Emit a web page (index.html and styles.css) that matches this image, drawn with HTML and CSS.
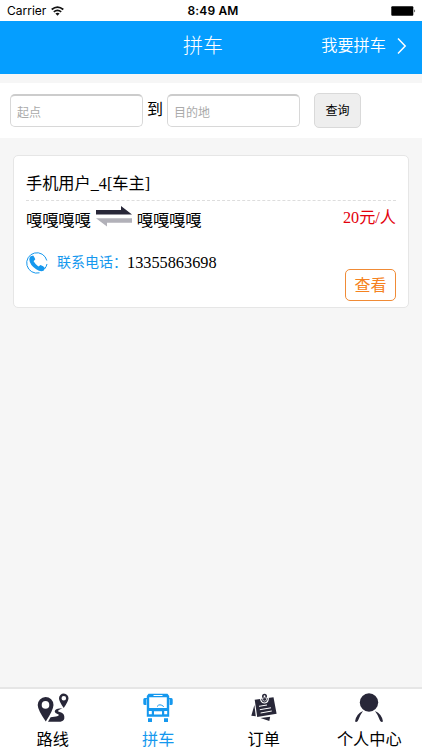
FILE: index.html
```html
<!DOCTYPE html>
<html lang="zh-CN">
<head>
<meta charset="utf-8">
<title>拼车</title>
<link rel="stylesheet" href="styles.css">
</head>
<body>
<div class="app">
  <div class="status">
    <div class="carrier"><span>Carrier</span>
      <svg width="13" height="10" viewBox="0 0 13 10" fill="none" stroke="#111" stroke-width="1.7"><path d="M.7 3.5Q6.5-1.4 12.3 3.5M2.8 5.8Q6.5 2.8 10.2 5.8"/><path d="M4.4 7.5Q6.5 5.9 8.6 7.5L6.5 9.7Z" fill="#111" stroke="none"/></svg>
    </div>
    <span class="time">8:49 AM</span>
    <svg class="battery" width="26" height="10" viewBox="0 0 26 10"><rect x=".3" y=".3" width="22" height="9.4" rx="1"/><path d="M23.4 3.2Q25 5 23.4 6.5Z"/></svg>
  </div>
  <header class="header">
    <h1>拼车</h1>
    <a class="publish"><span>我要拼车</span>
      <svg width="10" height="18" viewBox="0 0 10 18" fill="none" stroke="#fff" stroke-width="1.5"><path d="M1 1.5L8.2 9L1 16.5"/></svg>
    </a>
  </header>
  <form class="search">
    <input class="place" placeholder="起点">
    <span class="to">到</span>
    <input class="place" placeholder="目的地">
    <button class="query" type="button">查询</button>
  </form>
  <main class="content">
    <article class="card">
      <div class="user">手机用户_4[车主]</div>
      <div class="route">
        <span class="stop">嘎嘎嘎嘎</span>
        <svg class="swap" width="36" height="21" viewBox="0 0 36 21"><path d="M0 4H25V0L36 8.5H0Z" fill="#282738"/><path d="M36 12.3H0L11 20.5V16.7H36Z" fill="#b2b1b9"/></svg>
        <span class="stop">嘎嘎嘎嘎</span>
        <span class="price">20元/人</span>
      </div>
      <div class="contact">
        <svg width="22" height="22" viewBox="0 0 22 22"><path d="M13.5 20.8A10.2 10.2 0 1 1 20.8 8.5M21 12Q20.3 15 18.5 17" fill="none" stroke="#1598ee" stroke-width="1"/><path d="M4.6 4.2L7.2 3.6Q8.2 4.7 9.3 7.3L7.6 9.3Q9.2 12.3 12.4 14.5L14.5 13.1Q17.5 14.3 19 16L17.8 18.5Q14.8 20.4 10.2 17.2Q3.6 12.7 3.3 7.4Q3.4 5.3 4.6 4.2Z" fill="#1598ee"/></svg>
        <span class="label">联系电话：</span><span class="phone">13355863698</span>
      </div>
      <button class="view" type="button">查看</button>
    </article>
  </main>
  <nav class="tabs">
    <a class="tab">
      <svg width="32" height="30" viewBox="0 0 32 30"><path fill="#282738" fill-rule="evenodd" d="M8.5 4A8 8 0 0 0 .7 12Q.8 17 8.8 28.5Q16.3 17 16.5 12A8 8 0 0 0 8.5 4ZM8.5 8.1a3.8 3.8 0 1 1 0 7.6a3.8 3.8 0 0 1 0-7.6ZM26.8.5A4.8 4.8 0 0 0 22 5.3Q22 8.5 26.7 15Q31.4 8.5 31.5 5.3A4.8 4.8 0 0 0 26.8.5ZM26.8 3a2.3 2.3 0 1 1 0 4.6a2.3 2.3 0 0 1 0-4.6Z"/><path fill="#282738" d="M25.5 15.2Q18 15.3 17.7 18.4Q17.7 20 21 21.2Q23.5 22.3 19 23.4L13.6 24.2L11 28.8H23.5Q28 27.5 27.3 23.4Q27 20 22 18.8Q18.8 17.8 25.5 15.2Z"/></svg>
      <span>路线</span>
    </a>
    <a class="tab active">
      <svg width="30" height="30" viewBox="0 0 30 30"><path fill="#1598ee" fill-rule="evenodd" d="M5.5.8H24.5L26.2 3V23.8H3.8V3ZM6.2 4.2V15H23.8V4.2ZM5.8 18V21.2H8.8V18ZM11 18.3V21.5H19V18.3ZM21.2 18V21.2H24.2V18Z"/><path fill="#fff" d="M10.5 2H19.5V3H10.5Z"/><path fill="#1598ee" d="M.3 6.5Q.3 5 1.7 5H4.5V6.3H3.4V12H1.8Q.3 12 .3 10.5ZM29.7 6.5Q29.7 5 28.3 5H25.5V6.3H26.6V12H28.2Q29.7 12 29.7 10.5ZM5 25.2H9V29H5ZM21 25.2H25V29H21Z"/><path d="M14 13.6Q16.5 10 20.8 13.6" fill="none" stroke="#1598ee"/></svg>
      <span>拼车</span>
    </a>
    <a class="tab">
      <svg width="26" height="30" viewBox="0 0 26 30"><path fill="#282738" d="M3.4 12L.3 22.8L4.8 23.2ZM9.5 25L18.3 28L19.2 23.8ZM3.7 6.8L22.5 4.2L25.6 20.8L6.2 24Z"/><path d="M9.5 5.5Q10 10 13.7 10Q17.5 9.5 17.3 4.7" fill="none" stroke="#fff" stroke-width="1.2"/><circle cx="13.5" cy="3.2" r="1.7" fill="none" stroke="#282738" stroke-width="1.6"/><path d="M11.5 5.3Q13.5 4.2 15.7 5L15.4 7.3Q13.5 9 11.8 7.4Z" fill="#282738" stroke="#fff" stroke-width=".7"/><path d="M8 13.3L16 12M8.8 16.7L20 14.8M9.6 20L20.8 18" fill="none" stroke="#fff"/></svg>
      <span>订单</span>
    </a>
    <a class="tab">
      <svg width="30" height="30" viewBox="0 0 30 30" fill="#282738"><circle cx="15" cy="9.5" r="9.2"/><path d="M9 18Q2 21 1 28.5Q3.5 30 4.5 26.5Q6 22 9 18ZM21 18Q28 21 29 28.5Q26.5 30 25.5 26.5Q24 22 21 18Z"/></svg>
      <span>个人中心</span>
    </a>
  </nav>
</div>
</body>
</html>
```
FILE: styles.css
```css
* { box-sizing: border-box; }
body { margin: 0; background: #f6f6f6; color: #000; font-family: "Liberation Serif", "Noto Sans CJK SC", serif; }
svg { display: block; flex: none; }
button, input { font-family: "Liberation Sans", "Noto Sans CJK SC", sans-serif; }
.app { height: 750px; display: flex; flex-direction: column; }
.status { height: 21px; flex: none; display: grid; grid-template-columns: 1fr auto 1fr; align-items: center; padding: 1px 5px 0 7px; background: #fff; font: 12px/20px Inter, sans-serif; }
.carrier { display: flex; align-items: center; gap: 5px; }
.time { font-weight: 600; letter-spacing: .15px; margin-left: 2px; }
.battery { justify-self: end; }
.header { height: 53px; flex: none; display: grid; grid-template-columns: 1fr auto 1fr; align-items: center; padding: 0 15px 3px; background: #059eff; color: #fff; }
.header h1 { grid-column: 2; margin: 0; font-size: 20px; line-height: 30px; font-weight: 300; transform: translateX(-8px); }
.publish { justify-self: end; display: flex; align-items: center; gap: 11px; font-size: 16.2px; font-weight: 350; line-height: 24px; }
.search { height: 55px; flex: none; margin: 9px 0 0; padding: 10px 10px 0; display: flex; align-items: flex-start; background: #fff; }
.place { width: 133px; height: 33px; margin-top: 1px; padding: 3px 6px 0; border: 1px solid #d8d8d8; border-top: 2px solid #ccc; border-radius: 5px; font-size: 12px; background: #fff; }
.place::placeholder { color: #aaa; }
.to { width: 24px; text-align: center; font-size: 16px; line-height: 34px; }
.query { width: 47px; height: 35px; margin-left: 14px; padding: 0 0 2px; border: 1px solid #d9d9d9; border-radius: 5px; background: #eee; color: #000; font-size: 12px; }
.content { flex: 1; padding: 17px 13px; }
.card { height: 153px; padding: 12px 12px 6px; display: flex; flex-direction: column; border: 1px solid #e6e6e6; border-radius: 5px; background: #fff; }
.user { height: 33px; flex: none; border-bottom: 1px dashed #ddd; font-size: 16.2px; line-height: 33px; }
.route { height: 38px; display: flex; align-items: flex-start; font-size: 16.2px; line-height: 40px; }
.swap { margin: 5px 5px 0; }
.price { margin-left: auto; color: #e3000b; line-height: 34px; }
.contact { height: 30px; display: flex; align-items: center; line-height: 30px; margin-top: 9px; }
.label { margin-left: 9px; width: 70px; white-space: nowrap; color: #1598ee; font-size: 14px; }
.phone { font-size: 16.3px; }
.view { align-self: flex-end; flex: none; width: 51px; height: 32px; margin-top: -9px; padding: 0 0 2px; border: 1px solid #f08b36; border-radius: 5px; background: #fff; color: #f58220; font-size: 16px; }
.tabs { height: 63px; flex: none; display: grid; grid-template-columns: repeat(4, 1fr); padding-top: 4px; border-top: 2px solid #e6e6e6; background: #fff; }
.tab { display: flex; flex-direction: column; align-items: center; font-size: 16.2px; line-height: 24px; gap: 5px; }
.active { color: #1598ee; }
```
